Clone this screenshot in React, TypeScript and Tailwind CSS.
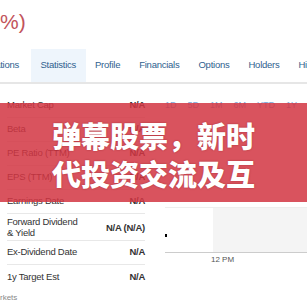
import React from 'react';

const tabs = ['Statistics', 'Profile', 'Financials', 'Options', 'Holders', 'Historical Data'];
const periods = ['1D', '5D', '1M', '6M', 'YTD', '1Y', '5Y'];

const rows: { label: React.ReactNode; value: string; tall?: boolean }[] = [
  { label: 'Market Cap', value: 'N/A' },
  { label: 'Beta', value: 'N/A' },
  { label: 'PE Ratio (TTM)', value: 'N/A' },
  { label: 'EPS (TTM)', value: 'N/A' },
  { label: 'Earnings Date', value: 'N/A' },
  { label: <>Forward Dividend<br />&amp; Yield</>, value: 'N/A (N/A)', tall: true },
  { label: 'Ex-Dividend Date', value: 'N/A' },
  { label: '1y Target Est', value: 'N/A' },
];

export default function App() {
  return (
    <div className="relative w-[307px] h-[307px] overflow-hidden bg-white font-['Liberation_Sans',Arial,sans-serif]">
      {/* price change tail */}
      <div className="h-[49px] pt-[9px] text-[21px] leading-[26px] text-[#c2535c]">%)</div>

      {/* Tabs */}
      <div className="flex h-[35px] border-b-2 border-[#e6e6e6] text-[9.5px] tracking-[-0.25px] text-[#2f5f8f] whitespace-nowrap">
        <div className="flex w-[31px] shrink-0 justify-end items-center overflow-hidden pr-[12px]">
          <span className="shrink-0">Conversations</span>
        </div>
        {tabs.map((t) => (
          <div
            key={t}
            className={`flex items-center shrink-0 px-[9.5px] ${t === 'Statistics' ? 'bg-[#eef5fc]' : ''}`}
          >
            {t}
          </div>
        ))}
      </div>

      <div className="flex pt-[10px]">
        {/* Stats table */}
        <div className="w-[152px] shrink-0 pl-[7px] pr-[7px]">
          {rows.map((r, i) => (
            <div
              key={i}
              className={`flex items-center justify-between text-[9.5px] tracking-[-0.25px] text-[#333] ${r.tall ? 'h-[27px] leading-[11px]' : 'h-[24px]'} ${i < rows.length - 1 ? 'border-b border-[#e8e8e8]' : ''}`}
            >
              <span>{r.label}</span>
              <span className="font-bold">{r.value}</span>
            </div>
          ))}
          <div className="-ml-[7px] pt-[3px] text-[8px] text-[#888]">rkets</div>
        </div>

        {/* Chart */}
        <div className="flex-1 pl-[13px]">
          <div className="flex h-[24px] items-center gap-[11px] text-[9px] text-[#7aa7d9] whitespace-nowrap">
            {periods.map((p) => (
              <span key={p}>{p}</span>
            ))}
          </div>
          <div className="relative mt-[89px] flex h-[46px] border-t border-[#eeeeee] border-b border-b-[#cccccc]">
            <div className="w-[48px] shrink-0" />
            <div className="flex-1 bg-[#f4f4f4]" />
            <span className="absolute left-0 top-[26px] w-[2px] h-[3px] bg-black" />
          </div>
          <div className="pl-[46px] pt-[1px] text-[8px] text-[#555]">12 PM</div>
        </div>
      </div>

      {/* Danmaku banner */}
      <div className="absolute left-0 top-[103px] w-full h-[99px] bg-[rgba(210,53,66,0.85)] pt-[13px] text-center text-white text-[29px] leading-[38px] font-black font-['Noto_Sans_CJK_SC',sans-serif] [text-shadow:0_0_2px_rgba(110,0,10,0.45)]">
        弹幕股票，新时
        <br />
        代投资交流及互
      </div>
    </div>
  );
}
